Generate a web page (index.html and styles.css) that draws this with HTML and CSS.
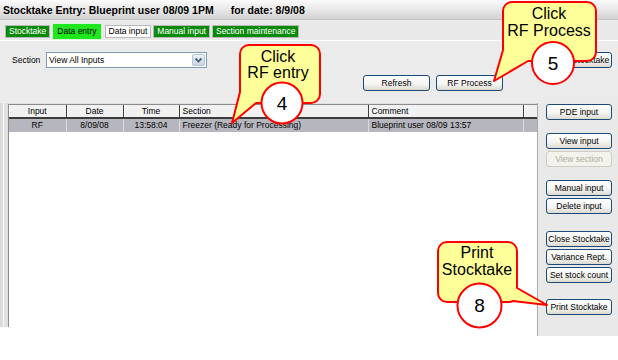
FILE: index.html
```html
<!DOCTYPE html>
<html>
<head>
<meta charset="utf-8">
<title>Stocktake Entry</title>
<link rel="stylesheet" href="styles.css">
</head>
<body>
<div class="page">
  <div class="window">
    <div class="titlebar"><span class="t1">Stocktake Entry: Blueprint user 08/09 1PM</span><span class="t2">for date: 8/9/08</span></div>
    <div class="tabs">
      <div class="tab dark">Stocktake</div>
      <div class="tab bright">Data entry</div>
      <div class="tab light">Data input</div>
      <div class="tab dark">Manual input</div>
      <div class="tab dark">Section maintenance</div>
    </div>
    <div class="top">
      <div class="top-left">
        <div class="section-row">
          <span class="lbl">Section</span>
          <div class="select">
            <span class="sel-text">View All Inputs</span>
            <span class="sel-btn"><svg width="9" height="7" viewBox="0 0 9 7"><polyline points="1.5,1.5 4.5,4.5 7.5,1.5" fill="none" stroke="#4d6185" stroke-width="1.8"/></svg></span>
          </div>
        </div>
        <div class="btn-row">
          <button class="btn top-btn">Refresh</button>
          <button class="btn top-btn">RF Process</button>
        </div>
      </div>
      <div class="top-right">
        <button class="btn side-btn">Open Stocktake</button>
      </div>
    </div>
  </div>
  <div class="main">
    <div class="table-col">
      <div class="table-box">
        <table class="grid">
          <colgroup><col class="c1"><col class="c2"><col class="c3"><col class="c4"><col class="c5"><col class="c6"></colgroup>
          <thead>
            <tr><th class="ctr">Input</th><th class="ctr">Date</th><th class="ctr">Time</th><th>Section</th><th>Comment</th><th></th></tr>
          </thead>
          <tbody>
            <tr class="sel"><td class="ctr">RF</td><td class="ctr">8/09/08</td><td class="ctr">13:58:04</td><td>Freezer (Ready for Processing)</td><td>Blueprint user 08/09 13:57</td><td></td></tr>
          </tbody>
        </table>
      </div>
    </div>
    <div class="side">
      <div class="group"><button class="btn side-btn">PDE input</button></div>
      <div class="group"><button class="btn side-btn">View input</button><button class="btn side-btn disabled">View section</button></div>
      <div class="group"><button class="btn side-btn">Manual input</button><button class="btn side-btn">Delete input</button></div>
      <div class="group g4"><button class="btn side-btn">Close Stocktake</button><button class="btn side-btn">Variance Rept.</button><button class="btn side-btn">Set stock count</button></div>
      <div class="group g5"><button class="btn side-btn">Print Stocktake</button></div>
    </div>
  </div>
  <svg class="callouts" width="618" height="360" viewBox="0 0 618 360">
    <g class="bubble">
      <path d="M249,45 H311 A9,9 0 0 1 320,54 V94 A9,9 0 0 1 311,103 H256 L232,123 L240,92 V54 A9,9 0 0 1 249,45 Z"/>
      <text x="278" y="62">Click</text>
      <text x="278" y="78">RF entry</text>
      <circle cx="282" cy="103" r="20.5"/>
      <text class="num" x="282" y="110">4</text>
    </g>
    <g class="bubble">
      <path d="M512,2 H587 A9,9 0 0 1 596,11 V52 A9,9 0 0 1 587,61 H528 L494,81 L503,50 V11 A9,9 0 0 1 512,2 Z"/>
      <text x="549" y="19">Click</text>
      <text x="549" y="36">RF Process</text>
      <circle cx="553" cy="63" r="21"/>
      <text class="num" x="553" y="70">5</text>
    </g>
    <g class="bubble">
      <path d="M447,242 H508 A9,9 0 0 1 517,251 V288 L547,305 L513,301 A9,9 0 0 1 508,302 H447 A9,9 0 0 1 438,293 V251 A9,9 0 0 1 447,242 Z"/>
      <text x="477" y="258">Print</text>
      <text x="477" y="275">Stocktake</text>
      <circle cx="479.5" cy="305.5" r="22"/>
      <text class="num" x="479.5" y="312">8</text>
    </g>
  </svg>
</div>
</body>
</html>
```
FILE: styles.css
```css
* { box-sizing: border-box; }
html, body { margin: 0; padding: 0; background: #fff; }
body { font-family: "Liberation Sans", Arial, sans-serif; font-size: 8.5px; color: #000; }

.page { position: relative; width: 618px; height: 360px; overflow: hidden; background: #fff; }

.window { background: #ebebeb; }

.titlebar {
  height: 20px;
  display: flex;
  align-items: center;
  padding-left: 3px;
  font-weight: bold;
  font-size: 10.5px;
  background: linear-gradient(#fbfbfb, #e6e6e6 55%, #d2d2d2);
  border-bottom: 1px solid #c4c4c4;
  white-space: nowrap;
}
.titlebar .t2 { margin-left: 17px; }

.tabs {
  height: 20px;
  display: flex;
  align-items: flex-end;
  padding-left: 5px;
  gap: 2px;
  background: #e9e9e9;
}
.tab {
  height: 13px;
  line-height: 11px;
  padding: 0 3px;
  border: 1px solid #b9b9b9;
  white-space: nowrap;
  margin-bottom: 2px;
}
.tab.dark { background: #0a8a0a; color: #fff; }
.tab.bright { background: #1fe81f; color: #000; height: 17px; line-height: 14px; margin-bottom: 0; border-color: #d8f5d8; padding: 0 4px; }
.tab.light { background: #fff; color: #000; margin-left: 1px; }

.top {
  height: 63px;
  display: grid;
  grid-template-columns: 537px 81px;
  border-top: 1px solid #fff;
}
.top-left { padding: 11px 34px 0 12px; display: flex; flex-direction: column; }
.section-row { display: flex; align-items: center; height: 16px; }
.lbl { width: 34px; }
.select {
  width: 161px;
  height: 16px;
  border: 1px solid #7f9db9;
  background: #fff;
  display: flex;
  align-items: center;
  justify-content: space-between;
  padding-left: 2px;
}
.sel-btn {
  width: 13px;
  height: 12px;
  margin-right: 1px;
  border: 1px solid #b6c3d6;
  border-radius: 2px;
  background: linear-gradient(#eef2f8, #c9d3e2);
  display: flex;
  align-items: center;
  justify-content: center;
}
.btn-row { display: flex; justify-content: flex-end; gap: 6px; margin-top: 7px; }

.btn {
  font-family: "Liberation Sans", Arial, sans-serif;
  font-size: 8.5px;
  color: #000;
  height: 16px;
  padding: 0;
  border: 1px solid #1c4a78;
  border-radius: 3px;
  background: linear-gradient(#ffffff, #f3f3ef 60%, #dcd9d0);
  white-space: nowrap;
  line-height: 13px;
}
.top-btn { width: 67px; }
.top-right { padding: 11px 0 0 9px; }
.side-btn { width: 66px; display: block; }
.btn.disabled { color: #b0ad9f; border-color: #cfcdc2; background: #f3f2ec; }

.main { display: flex; align-items: flex-start; }
.table-col {
  width: 537px;
  height: 224px;
  padding: 1px 0 0 8px;
  background: linear-gradient(90deg, #dcdcdc 0, #dcdcdc 3px, #fafafa 3px, #fafafa 4px, #e0e0e0 4px);
}
.table-box {
  width: 529px;
  height: 100%;
  background: #fff;
  border-left: 1px solid #8c8c8c;
  border-top: 1px solid #8c8c8c;
}
.grid { border-collapse: collapse; table-layout: fixed; width: 528px; }
.c1 { width: 57px; } .c2 { width: 57px; } .c3 { width: 56px; }
.c4 { width: 189px; } .c5 { width: 155px; } .c6 { width: 14px; }
.grid th {
  height: 13px;
  padding: 0 3px;
  font-weight: normal;
  text-align: left;
  background: #f1f1f1;
  border-right: 1px solid #3c3c3c;
  border-bottom: 2px solid #3c3c3c;
  box-shadow: inset 1px 0 #ffffff;
  line-height: 11px;
}
.grid td {
  height: 14px;
  padding: 0 3px;
  background: #b6b6be;
  border-right: 1px solid #dcdce0;
  line-height: 13px;
  white-space: nowrap;
  overflow: hidden;
}
.grid .ctr { text-align: center; }

.side {
  width: 81px;
  height: 233px;
  background: #e9e9e9;
  border-left: 1px solid #a9a9a9;
  padding: 1px 0 0 8px;
  display: flex;
  flex-direction: column;
  gap: 13px;
}
.group { display: flex; flex-direction: column; gap: 2px; }
.g4 { margin-top: 4px; }
.g5 { margin-top: 3px; }

.callouts { position: absolute; left: 0; top: 0; pointer-events: none; }
.bubble path { fill: #ffff99; stroke: #ff0000; stroke-width: 2; stroke-linejoin: round; }
.bubble circle { fill: #fff; stroke: #ff0000; stroke-width: 2; }
.bubble text { font-family: "Liberation Sans", Arial, sans-serif; font-size: 16px; text-anchor: middle; fill: #000; }
.bubble text.num { font-size: 19px; }
```
